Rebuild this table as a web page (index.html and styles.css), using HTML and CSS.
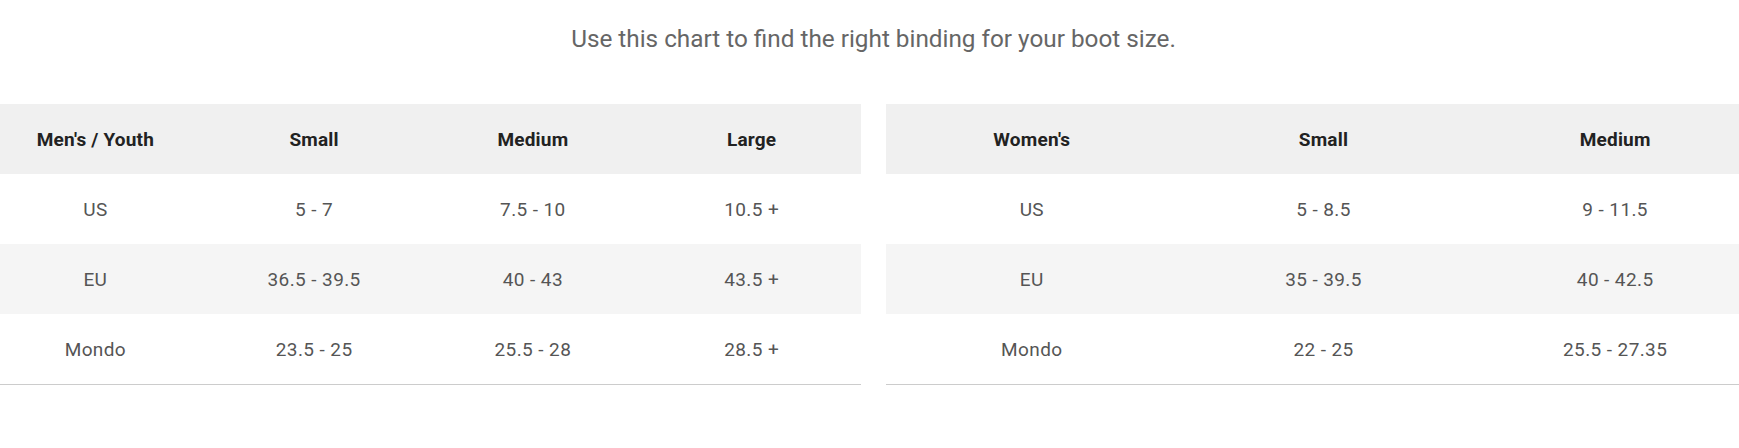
FILE: index.html
```html
<!DOCTYPE html>
<html lang="en">
<head>
<meta charset="utf-8">
<title>Binding size chart</title>
<link rel="stylesheet" href="styles.css">
</head>
<body>
<main class="chart">
  <p class="intro">Use this chart to find the right binding for your boot size.</p>
  <div class="tables">
    <table class="size-table">
      <thead>
        <tr><th>Men's / Youth</th><th>Small</th><th>Medium</th><th>Large</th></tr>
      </thead>
      <tbody>
        <tr><td>US</td><td>5 - 7</td><td>7.5 - 10</td><td>10.5 +</td></tr>
        <tr><td>EU</td><td>36.5 - 39.5</td><td>40 - 43</td><td>43.5 +</td></tr>
        <tr><td>Mondo</td><td>23.5 - 25</td><td>25.5 - 28</td><td>28.5 +</td></tr>
      </tbody>
    </table>
    <table class="size-table">
      <thead>
        <tr><th>Women's</th><th>Small</th><th>Medium</th></tr>
      </thead>
      <tbody>
        <tr><td>US</td><td>5 - 8.5</td><td>9 - 11.5</td></tr>
        <tr><td>EU</td><td>35 - 39.5</td><td>40 - 42.5</td></tr>
        <tr><td>Mondo</td><td>22 - 25</td><td>25.5 - 27.35</td></tr>
      </tbody>
    </table>
  </div>
</main>
</body>
</html>
```

FILE: styles.css
```css
html, body {
  margin: 0;
  padding: 0;
  background: #ffffff;
  overflow: hidden;
}

body {
  font-family: Roboto, "Liberation Sans", Arial, sans-serif;
}

.chart {
  display: flex;
  flex-direction: column;
  align-items: flex-start;
}

.intro {
  align-self: stretch;
  margin: 0;
  padding: 23px 0 0 8px;
  height: 104px;
  box-sizing: border-box;
  text-align: center;
  font-size: 24.3px;
  line-height: 32px;
  color: #666666;
}

.tables {
  display: flex;
  gap: 25px;
  margin-left: -14px;
}

.size-table {
  width: 875px;
  flex: none;
  table-layout: fixed;
  border-collapse: collapse;
  border-bottom: 1px solid #cccccc;
}

.size-table th,
.size-table td {
  height: 70px;
  padding: 0;
  text-align: center;
  vertical-align: middle;
  font-size: 19px;
}

.size-table th {
  background: #f0f0f0;
  color: #222222;
  font-weight: 700;
  letter-spacing: 0.2px;
}

.size-table td {
  color: #555555;
  font-weight: 400;
  letter-spacing: 0.4px;
}

.size-table tbody tr:nth-child(2) td {
  background: #f5f5f5;
}
```
